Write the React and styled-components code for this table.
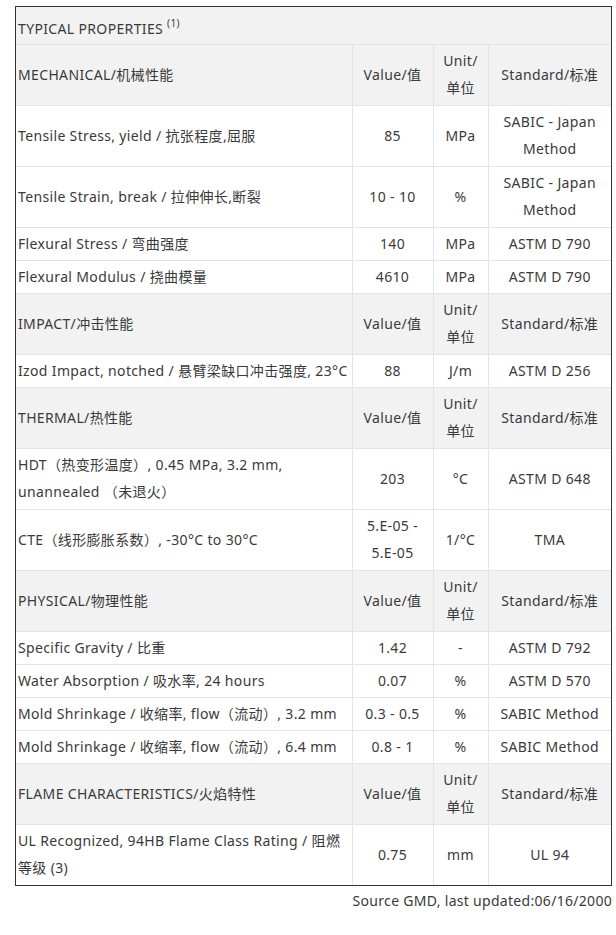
import React from "react";
import styled, { createGlobalStyle } from "styled-components";

const Global = createGlobalStyle`
  html, body { margin: 0; padding: 0; background: #fff; }
  body { font-family: "Noto Sans", "Noto Sans CJK SC", sans-serif; color: #3a3a3a; }
`;

const Page = styled.div`
  padding: 6px 4px 0 15px;
  width: 616px;
  box-sizing: border-box;
`;

const Frame = styled.div`
  width: 597px;
  box-sizing: border-box;
  border: 1px solid #333;
`;

const Table = styled.table`
  width: 595px;
  border-collapse: collapse;
  table-layout: fixed;
  font-size: 14px;
  line-height: 27px;
  letter-spacing: 0.35px;
  tr:first-child > td { border-top: 0; }
  tr:last-child > td { border-bottom: 0; }
  td:first-child { border-left: 0; }
  td:last-child { border-right: 0; }
`;

const Col = styled.col`
  width: ${(p) => p.$w}px;
`;

const Row = styled.tr`
  background: ${(p) => (p.$head ? "#f2f2f2" : "#fff")};
  height: ${(p) => (p.$tall ? "61px" : "auto")};
`;

const Cell = styled.td`
  border: 1px solid #e4e4e4;
  padding: 2px 2px 3px;
  text-align: ${(p) => (p.$center ? "center" : "left")};
  vertical-align: middle;
  color: #3a3a3a;
`;

const TitleCell = styled.td`
  border: 1px solid #e4e4e4;
  height: 37px;
  box-sizing: border-box;
  padding: 6px 2px 0;
  color: #3a3a3a;
  sup { font-size: 10px; line-height: 0; vertical-align: 7px; }
`;

const Source = styled.div`
  text-align: right;
  font-size: 14px;
  letter-spacing: 0.3px;
  color: #3a3a3a;
  padding-top: 5px;
  width: 597px;
`;

const head = (t) => ({
  head: true,
  tall: true,
  c: [t, "Value/值", <>Unit/<br />单位</>, "Standard/标准"],
});

const rows = [
  head("MECHANICAL/机械性能"),
  { tall: true, c: ["Tensile Stress, yield / 抗张程度,屈服", "85", "MPa", "SABIC - Japan Method"] },
  { tall: true, c: ["Tensile Strain, break / 拉伸伸长,断裂", "10 - 10", "%", "SABIC - Japan Method"] },
  { c: ["Flexural Stress / 弯曲强度", "140", "MPa", "ASTM D 790"] },
  { c: ["Flexural Modulus / 挠曲模量", "4610", "MPa", "ASTM D 790"] },
  head("IMPACT/冲击性能"),
  { c: ["Izod Impact, notched / 悬臂梁缺口冲击强度, 23°C", "88", "J/m", "ASTM D 256"] },
  head("THERMAL/热性能"),
  { tall: true, c: ["HDT（热变形温度）, 0.45 MPa, 3.2 mm, unannealed （未退火）", "203", "°C", "ASTM D 648"] },
  { tall: true, c: ["CTE（线形膨胀系数）, -30°C to 30°C", "5.E-05 - 5.E-05", "1/°C", "TMA"] },
  head("PHYSICAL/物理性能"),
  { c: ["Specific Gravity / 比重", "1.42", "-", "ASTM D 792"] },
  { c: ["Water Absorption / 吸水率, 24 hours", "0.07", "%", "ASTM D 570"] },
  { c: ["Mold Shrinkage / 收缩率, flow（流动）, 3.2 mm", "0.3 - 0.5", "%", "SABIC Method"] },
  { c: ["Mold Shrinkage / 收缩率, flow（流动）, 6.4 mm", "0.8 - 1", "%", "SABIC Method"] },
  head("FLAME CHARACTERISTICS/火焰特性"),
  { tall: true, c: ["UL Recognized, 94HB Flame Class Rating / 阻燃等级 (3)", "0.75", "mm", "UL 94"] },
];

export default function App() {
  return (
    <Page>
      <Global />
      <Frame>
        <Table>
          <colgroup>
            <Col $w={336} />
            <Col $w={81} />
            <Col $w={55} />
            <Col $w={123} />
          </colgroup>
          <tbody>
            <Row $head>
              <TitleCell colSpan={4}>
                TYPICAL PROPERTIES <sup>(1)</sup>
              </TitleCell>
            </Row>
            {rows.map((r, i) => (
              <Row key={i} $head={r.head} $tall={r.tall}>
                {r.c.map((t, j) => (
                  <Cell key={j} $center={j > 0}>
                    {t}
                  </Cell>
                ))}
              </Row>
            ))}
          </tbody>
        </Table>
      </Frame>
      <Source>Source GMD, last updated:06/16/2000</Source>
    </Page>
  );
}
